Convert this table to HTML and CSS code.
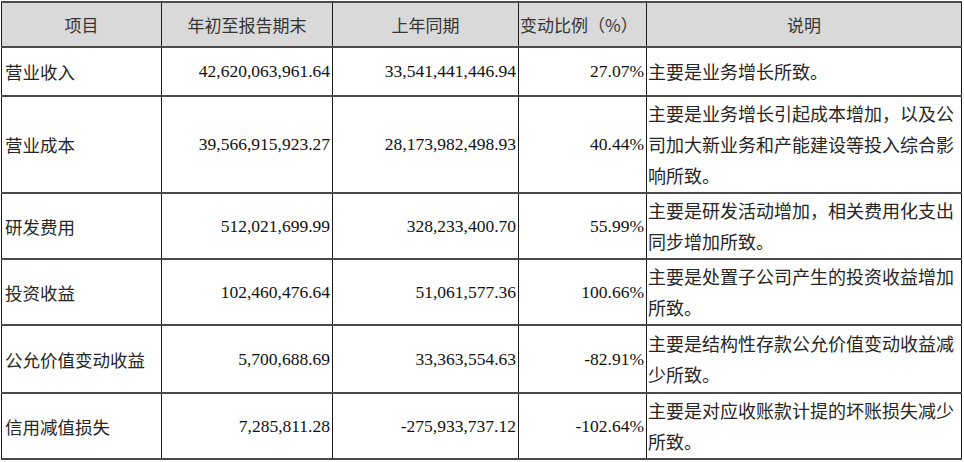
FILE: index.html
```html
<!DOCTYPE html>
<html lang="zh">
<head>
<meta charset="utf-8">
<link rel="stylesheet" href="styles.css">
</head>
<body>
<table class="fin">
  <colgroup>
    <col class="c1"><col class="c2"><col class="c3"><col class="c4"><col class="c5">
  </colgroup>
  <thead>
    <tr class="head">
      <th>项目</th>
      <th>年初至报告期末</th>
      <th>上年同期</th>
      <th class="pct-h">变动比例（%）</th>
      <th>说明</th>
    </tr>
  </thead>
  <tbody>
    <tr class="r1">
      <td class="name">营业收入</td>
      <td class="num">42,620,063,961.64</td>
      <td class="num">33,541,441,446.94</td>
      <td class="num">27.07%</td>
      <td class="desc">主要是业务增长所致。</td>
    </tr>
    <tr class="r2">
      <td class="name">营业成本</td>
      <td class="num">39,566,915,923.27</td>
      <td class="num">28,173,982,498.93</td>
      <td class="num">40.44%</td>
      <td class="desc">主要是业务增长引起成本增加，以及公<br>司加大新业务和产能建设等投入综合影<br>响所致。</td>
    </tr>
    <tr class="r3">
      <td class="name">研发费用</td>
      <td class="num">512,021,699.99</td>
      <td class="num">328,233,400.70</td>
      <td class="num">55.99%</td>
      <td class="desc">主要是研发活动增加，相关费用化支出<br>同步增加所致。</td>
    </tr>
    <tr class="r4">
      <td class="name">投资收益</td>
      <td class="num">102,460,476.64</td>
      <td class="num">51,061,577.36</td>
      <td class="num">100.66%</td>
      <td class="desc">主要是处置子公司产生的投资收益增加<br>所致。</td>
    </tr>
    <tr class="r5">
      <td class="name">公允价值变动收益</td>
      <td class="num">5,700,688.69</td>
      <td class="num">33,363,554.63</td>
      <td class="num">-82.91%</td>
      <td class="desc">主要是结构性存款公允价值变动收益减<br>少所致。</td>
    </tr>
    <tr class="r6">
      <td class="name">信用减值损失</td>
      <td class="num">7,285,811.28</td>
      <td class="num">-275,933,737.12</td>
      <td class="num">-102.64%</td>
      <td class="desc">主要是对应收账款计提的坏账损失减少<br>所致。</td>
    </tr>
  </tbody>
</table>
</body>
</html>
```
FILE: styles.css
```css
html, body {
  margin: 0;
  padding: 0;
  background: #ffffff;
}
body {
  padding: 1px 0 0 1px;
  font-family: "Noto Sans CJK SC", "Liberation Serif", serif;
  color: #222222;
}
.fin {
  border-collapse: collapse;
  table-layout: fixed;
  width: 960px;
}
.c1 { width: 160px; }
.c2 { width: 171px; }
.c3 { width: 186px; }
.c4 { width: 128px; }
.c5 { width: 315px; }

.fin th, .fin td {
  border-left: 1px solid #1a1a1a;
  border-right: 1px solid #1a1a1a;
  border-top: 2px solid #4a4a4a;
  border-bottom: 2px solid #4a4a4a;
  padding: 0 2px;
  vertical-align: middle;
  overflow: hidden;
  white-space: nowrap;
}
.head th {
  background: #d9d9d9;
  height: 43px;
  font-weight: normal;
  font-size: 17px;
  color: #363636;
  text-align: center;
  font-family: "Noto Sans CJK SC", sans-serif;
  line-height: 22px;
}
.head .pct-h {
  text-align: left;
  padding-left: 1px;
}
.name {
  font-size: 17.5px;
  text-align: left;
  padding-left: 3px !important;
  font-family: "Noto Sans CJK SC", sans-serif;
  color: #262626;
}
.num {
  font-family: "Liberation Serif", "Times New Roman", serif;
  font-size: 17.5px;
  text-align: right;
  color: #111111;
}
.desc {
  font-size: 18px;
  line-height: 31px;
  text-align: left;
  font-family: "Noto Sans CJK SC", sans-serif;
  color: #262626;
  padding-left: 1px !important;
}
.r1 td { height: 47px; }
.r2 td { height: 95px; }
.r3 td { height: 64px; }
.r4 td { height: 64px; }
.r5 td { height: 66px; }
.r6 td { height: 64px; }
```
